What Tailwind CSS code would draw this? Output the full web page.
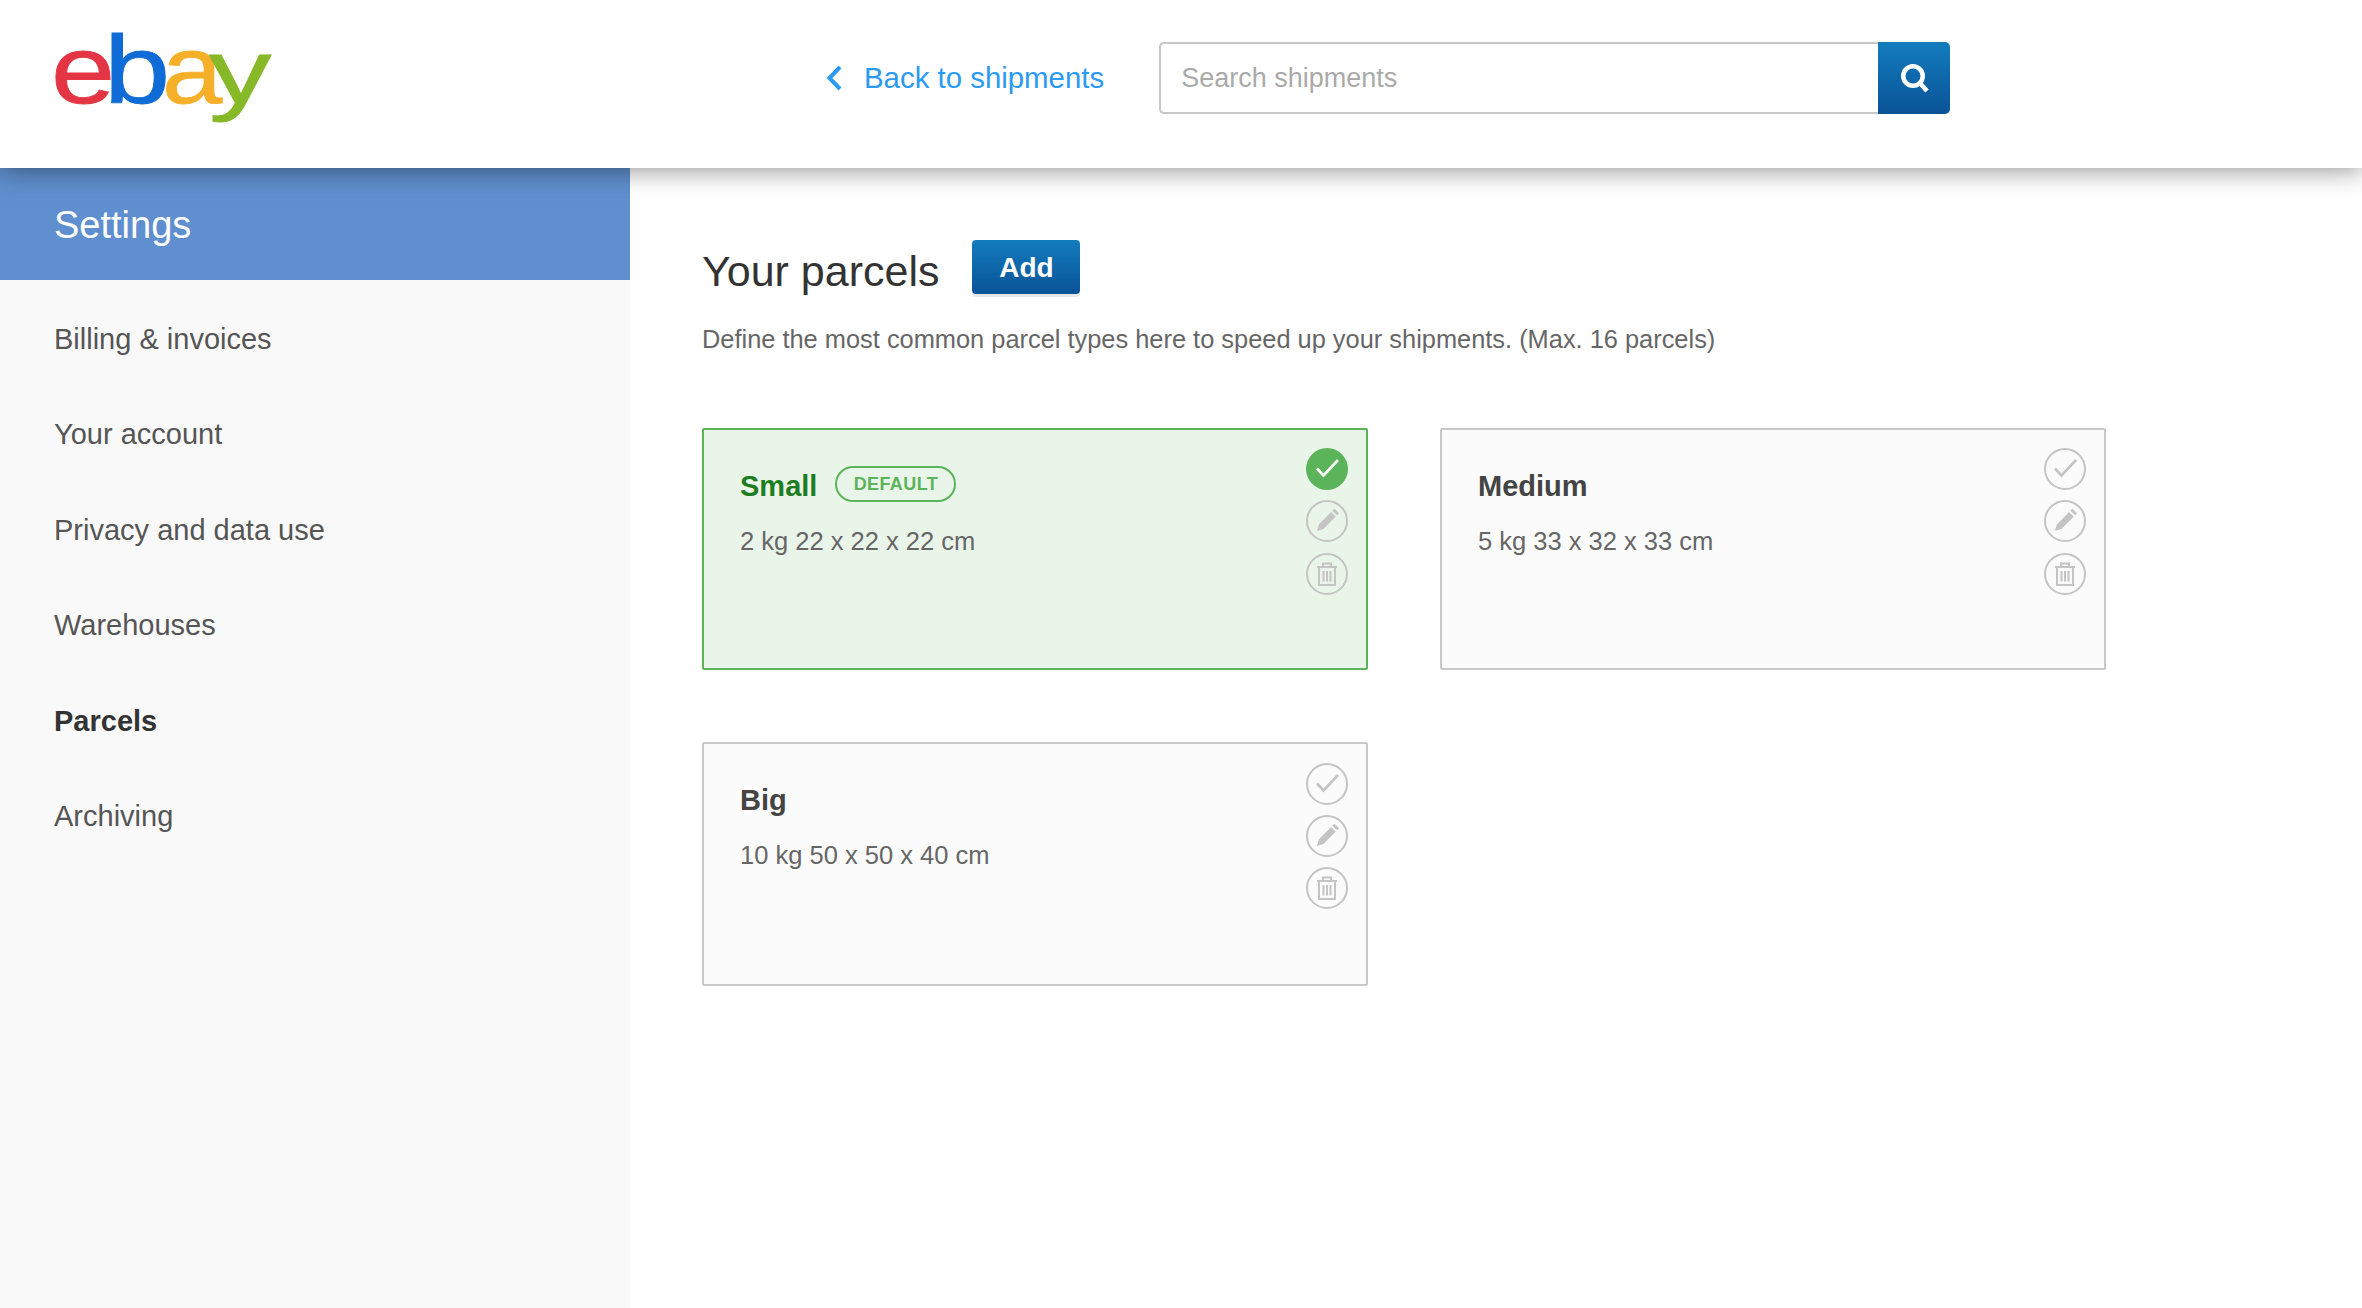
<!DOCTYPE html>
<html lang="en">
<head>
    <meta charset="UTF-8">
    <meta name="viewport" content="width=device-width, initial-scale=1.0">
    <title>Your parcels</title>
    <script src="https://cdn.jsdelivr.net/npm/@tailwindcss/browser@4"></script>
</head>
<body class="bg-white h-screen overflow-hidden flex flex-col font-['Liberation_Sans',Arial,sans-serif] text-[#333]">
    <svg class="hidden">
        <symbol id="i-check" viewBox="0 0 42 42"><path d="M11 20.500l6.500 7L32 12" fill="none" stroke="currentColor" stroke-width="2.600"/></symbol>
        <symbol id="i-edit" viewBox="0 0 42 42"><path d="M11 31l1.800-6.500L25 12l4.800 4.600L17.500 29zM26.300 10.700l2-2 4.800 4.600-2 2z" fill="currentColor"/></symbol>
        <symbol id="i-trash" viewBox="0 0 42 42"><g fill="none" stroke="currentColor" stroke-width="2"><path d="M11 14h20M13 14.500v17.500h16V14.500M17 13.500v-3h8v3"/><path d="M17.500 18v10.500M21 18v10.500M24.500 18v10.500"/></g></symbol>
    </svg>

    <!-- Header -->
    <header class="relative z-10 h-[168px] shrink-0 bg-white flex items-center pl-[54px] pb-[12px] shadow-[0_0_26px_rgba(0,0,0,0.5)]">
        <svg class="w-[220px] h-[90px] mt-[-1px] overflow-visible" viewBox="0 0 220 90">
            <text transform="translate(-3 70) scale(1.2 1)" font-size="96" font-family="Liberation Sans" fill="#e43545" stroke="#e43545" stroke-width="0.8">e</text>
            <text transform="translate(50 70) scale(1.24 1)" font-size="96" font-family="Liberation Sans" fill="#0f6bd6" stroke="#0f6bd6" stroke-width="0.8">b</text>
            <text transform="translate(108 70) scale(1.13 1)" font-size="96" font-family="Liberation Sans" fill="#f5af28" stroke="#f5af28" stroke-width="0.8">a</text>
            <text transform="translate(155 70) scale(1.3 0.95)" font-size="96" font-family="Liberation Sans" fill="#86b828" stroke="#86b828" stroke-width="0.8">y</text>
        </svg>
        <a class="ml-[552px] flex items-center text-[#2b9af3] text-[29.400px]" href="#">
            <svg class="w-[17px] h-[26px] mr-[21px]" viewBox="0 0 17 26"><path d="M14 2L3.500 13 14 24" fill="none" stroke="currentColor" stroke-width="4"/></svg>
            Back to shipments
        </a>
        <div class="ml-[55px] w-[791px] h-[72px] flex">
            <input class="flex-1 min-w-0 h-full px-[20px] border-2 border-r-0 border-[#c8c8c8] rounded-l-[5px] text-[27px] placeholder:text-[#aaa] outline-none" placeholder="Search shipments">
            <button class="w-[72px] h-full flex items-center justify-center rounded-r-[5px] bg-gradient-to-b from-[#137cbd] to-[#0a5397]">
                <svg class="w-[28px] h-[29px] ml-[2px]" viewBox="0 0 28 29"><circle cx="12" cy="12" r="9.750" fill="none" stroke="white" stroke-width="4.500"/><path d="M18.500 18.500l7.500 8.500" stroke="white" stroke-width="4.500" fill="none"/></svg>
            </button>
        </div>
    </header>

    <div class="flex flex-1 min-h-0">
        <!-- Sidebar -->
        <aside class="w-[630px] shrink-0 bg-[#f9f9f9]">
            <div class="h-[112px] bg-[#5f8fce] text-white text-[38px] flex items-center px-[54px] pt-[2px]">Settings</div>
            <nav class="pt-[12px] text-[29px] text-[#555]">
                <a class="h-[95.400px] flex items-center px-[54px]" href="#">Billing &amp; invoices</a>
                <a class="h-[95.400px] flex items-center px-[54px]" href="#">Your account</a>
                <a class="h-[95.400px] flex items-center px-[54px]" href="#">Privacy and data use</a>
                <a class="h-[95.400px] flex items-center px-[54px]" href="#">Warehouses</a>
                <a class="h-[95.400px] flex items-center px-[54px] font-bold text-[#333]" href="#">Parcels</a>
                <a class="h-[95.400px] flex items-center px-[54px]" href="#">Archiving</a>
            </nav>
        </aside>

        <!-- Main Content -->
        <main class="flex-1 pl-[72px] pt-[72px]">
            <div class="flex items-start">
                <h1 class="text-[43px] leading-[62px] font-normal">Your parcels</h1>
                <button class="ml-[33px] w-[108px] h-[54px] pt-[1px] rounded-[4px] bg-gradient-to-b from-[#137cbd] to-[#0a5397] text-white text-[28px] font-bold shadow-[0_3px_0_rgba(0,0,0,0.09)]">Add</button>
            </div>
            <p class="mt-[19px] text-[25.400px] leading-[36px] text-[#666]">Define the most common parcel types here to speed up your shipments. (Max. 16 parcels)</p>

            <div class="mt-[71px] grid grid-cols-[666px_666px] gap-x-[72px] gap-y-[72px]">
                <!-- Small -->
                <div class="h-[242px] flex justify-between border-2 border-[#5cb45a] rounded-[2px] bg-[#eaf5ea] pl-[36px] pr-[18px] pt-[18px]">
                    <div class="pt-[21px]">
                        <div class="flex items-center h-[36px]">
                            <span class="text-[29px] font-bold text-[#1e7d22]">Small</span>
                            <span class="ml-[18px] mt-[-6px] w-[121px] h-[36px] flex items-center justify-center border-2 border-[#5cb45a] rounded-full text-[18px] font-bold tracking-[0.400px] text-[#5cb45a]">DEFAULT</span>
                        </div>
                        <p class="mt-[18px] text-[25.500px] leading-[36px] text-[#666]">2 kg 22 x 22 x 22 cm</p>
                    </div>
                    <div class="flex flex-col gap-[10px]">
                        <span class="w-[42px] h-[42px] rounded-full bg-[#5cb45a] text-white"><svg class="block w-[42px] h-[42px]"><use href="#i-check"/></svg></span>
                        <span class="w-[42px] h-[42px] rounded-full border-2 border-[#c4c4c4] text-[#c4c4c4]"><svg class="block -m-[2px] w-[42px] h-[42px]"><use href="#i-edit"/></svg></span>
                        <span class="mt-[1px] w-[42px] h-[42px] rounded-full border-2 border-[#c4c4c4] text-[#c4c4c4]"><svg class="block -m-[2px] w-[42px] h-[42px]"><use href="#i-trash"/></svg></span>
                    </div>
                </div>

                <!-- Medium -->
                <div class="h-[242px] flex justify-between border-2 border-[#c8c8c8] rounded-[2px] bg-[#fbfbfb] pl-[36px] pr-[18px] pt-[18px]">
                    <div class="pt-[21px]">
                        <div class="flex items-center h-[36px]">
                            <span class="text-[29px] font-bold text-[#444]">Medium</span>
                        </div>
                        <p class="mt-[18px] text-[25.500px] leading-[36px] text-[#666]">5 kg 33 x 32 x 33 cm</p>
                    </div>
                    <div class="flex flex-col gap-[10px]">
                        <span class="w-[42px] h-[42px] rounded-full border-2 border-[#c4c4c4] text-[#c4c4c4]"><svg class="block -m-[2px] w-[42px] h-[42px]"><use href="#i-check"/></svg></span>
                        <span class="w-[42px] h-[42px] rounded-full border-2 border-[#c4c4c4] text-[#c4c4c4]"><svg class="block -m-[2px] w-[42px] h-[42px]"><use href="#i-edit"/></svg></span>
                        <span class="mt-[1px] w-[42px] h-[42px] rounded-full border-2 border-[#c4c4c4] text-[#c4c4c4]"><svg class="block -m-[2px] w-[42px] h-[42px]"><use href="#i-trash"/></svg></span>
                    </div>
                </div>

                <!-- Big -->
                <div class="h-[244px] flex justify-between border-2 border-[#c8c8c8] rounded-[2px] bg-[#fbfbfb] pl-[36px] pr-[18px] pt-[19px]">
                    <div class="pt-[20px]">
                        <div class="flex items-center h-[36px]">
                            <span class="text-[29px] font-bold text-[#444]">Big</span>
                        </div>
                        <p class="mt-[18px] text-[25.500px] leading-[36px] text-[#666]">10 kg 50 x 50 x 40 cm</p>
                    </div>
                    <div class="flex flex-col gap-[10px]">
                        <span class="w-[42px] h-[42px] rounded-full border-2 border-[#c4c4c4] text-[#c4c4c4]"><svg class="block -m-[2px] w-[42px] h-[42px]"><use href="#i-check"/></svg></span>
                        <span class="w-[42px] h-[42px] rounded-full border-2 border-[#c4c4c4] text-[#c4c4c4]"><svg class="block -m-[2px] w-[42px] h-[42px]"><use href="#i-edit"/></svg></span>
                        <span class="w-[42px] h-[42px] rounded-full border-2 border-[#c4c4c4] text-[#c4c4c4]"><svg class="block -m-[2px] w-[42px] h-[42px]"><use href="#i-trash"/></svg></span>
                    </div>
                </div>
            </div>
        </main>
    </div>
</body>
</html>
